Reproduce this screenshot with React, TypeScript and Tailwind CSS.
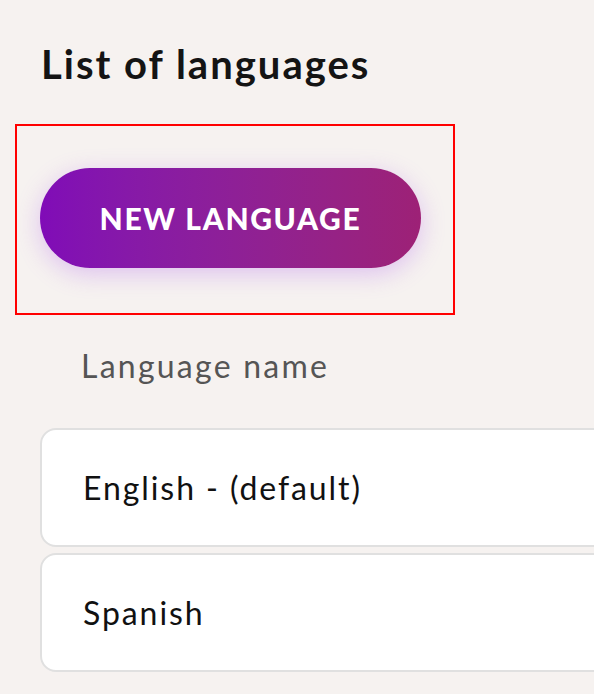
export default function App() {
  const langs = ['English - (default)', 'Spanish']

  return (
    <div className="min-h-screen w-full overflow-hidden bg-[#f6f2f0] font-['Lato','Liberation_Sans',sans-serif]">
      <div className="pl-10 pt-[42px]">
        <h1 className="ml-px text-[40px] font-bold leading-[44px] tracking-[0.05em] text-[#141414]">List of languages</h1>

        {/* selection box */}
        <div className="ml-[-25px] mt-[38px] h-[191px] w-[440px] border-2 border-[#ff0000] pl-[23px] pt-[42px]">
          <button className="flex h-[100px] w-[381px] items-center justify-center rounded-full bg-gradient-to-r from-[#800bb7] to-[#9d2176] text-[30px] font-black tracking-[0.055em] text-white shadow-[0_6px_24px_rgba(170,90,235,0.32)]">
            NEW LANGUAGE
          </button>
        </div>

        <div className="pl-[41px] pt-[31px] text-[32px] leading-[40px] tracking-[0.07em] text-[#555555]">Language name</div>

        <div className="mt-[42px] flex flex-col gap-[6px]">
          {langs.map((l) => (
            <div
              key={l}
              className="flex h-[119px] w-[700px] items-center rounded-[16px] border-2 border-[#e0e0e0] bg-white pl-[41px] text-[32px] tracking-[0.06em] text-[#111111]"
            >
              {l}
            </div>
          ))}
        </div>
      </div>
    </div>
  )
}
